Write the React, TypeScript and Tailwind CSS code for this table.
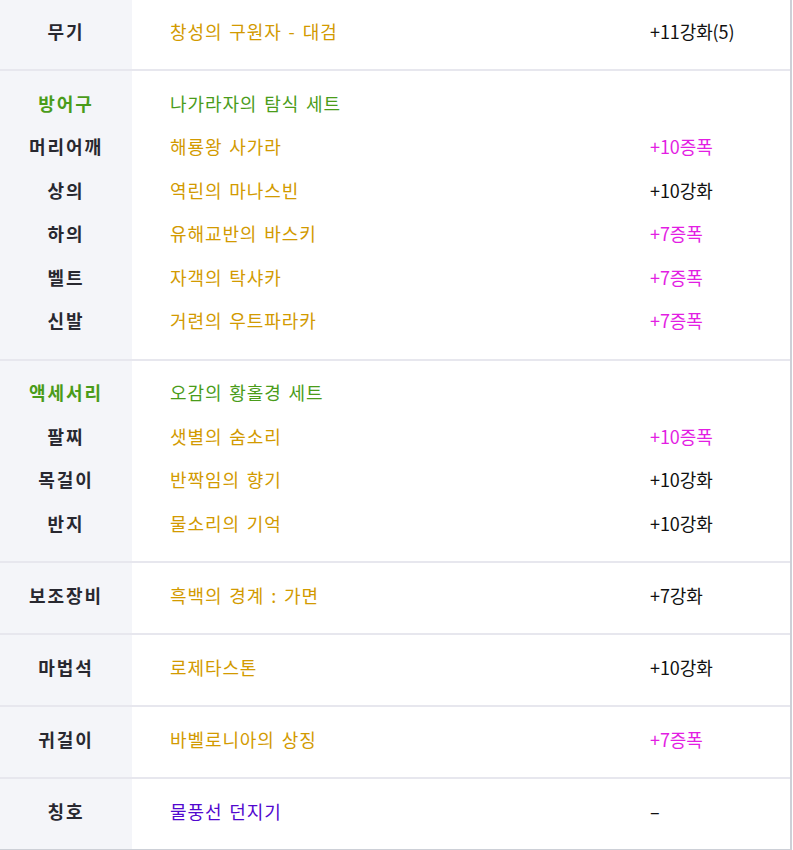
import React from "react";

type Row = { label: string; name: string; nameColor: string; val: string; valColor: string; labelColor?: string };

const GOLD = "text-[#d29a00]";
const GREEN = "text-[#4a9c1a]";
const MAG = "text-[#e31ee3]";
const BLK = "text-[#111111]";
const PUR = "text-[#5208cf]";

const sections: { rows: Row[]; first?: boolean }[] = [
  { first: true, rows: [{ label: "무기", name: "창성의 구원자 - 대검", nameColor: GOLD, val: "+11강화(5)", valColor: BLK }] },
  {
    rows: [
      { label: "방어구", labelColor: GREEN, name: "나가라자의 탐식 세트", nameColor: GREEN, val: "", valColor: BLK },
      { label: "머리어깨", name: "해룡왕 사가라", nameColor: GOLD, val: "+10증폭", valColor: MAG },
      { label: "상의", name: "역린의 마나스빈", nameColor: GOLD, val: "+10강화", valColor: BLK },
      { label: "하의", name: "유해교반의 바스키", nameColor: GOLD, val: "+7증폭", valColor: MAG },
      { label: "벨트", name: "자객의 탁샤카", nameColor: GOLD, val: "+7증폭", valColor: MAG },
      { label: "신발", name: "거련의 우트파라카", nameColor: GOLD, val: "+7증폭", valColor: MAG },
    ],
  },
  {
    rows: [
      { label: "액세서리", labelColor: GREEN, name: "오감의 황홀경 세트", nameColor: GREEN, val: "", valColor: BLK },
      { label: "팔찌", name: "샛별의 숨소리", nameColor: GOLD, val: "+10증폭", valColor: MAG },
      { label: "목걸이", name: "반짝임의 향기", nameColor: GOLD, val: "+10강화", valColor: BLK },
      { label: "반지", name: "물소리의 기억", nameColor: GOLD, val: "+10강화", valColor: BLK },
    ],
  },
  { rows: [{ label: "보조장비", name: "흑백의 경계 : 가면", nameColor: GOLD, val: "+7강화", valColor: BLK }] },
  { rows: [{ label: "마법석", name: "로제타스톤", nameColor: GOLD, val: "+10강화", valColor: BLK }] },
  { rows: [{ label: "귀걸이", name: "바벨로니아의 상징", nameColor: GOLD, val: "+7증폭", valColor: MAG }] },
  { rows: [{ label: "칭호", name: "물풍선 던지기", nameColor: PUR, val: "–", valColor: BLK }] },
];

export default function App() {
  return (
    <div
      className="w-[793px] h-[850px] overflow-hidden bg-white"
      style={{ fontFamily: '"Noto Sans CJK KR", "Noto Sans", sans-serif' }}
    >
      <div className="w-[792px] border-r-2 border-b-2 border-[#cdd0d7] flex flex-col">
        {sections.map((s, si) => (
          <div
            key={si}
            className={`flex ${si < sections.length - 1 ? "border-b-2 border-[#e7e7ee]" : ""}`}
          >
            <div className={`w-[132px] shrink-0 bg-[#f4f5f9] ${s.first ? "pt-[9.5px]" : "pt-[10.5px]"} pb-[16px]`}>
              {s.rows.map((r, i) => (
                <div
                  key={i}
                  className={`h-[43.5px] flex items-center justify-center text-[18px] font-semibold tracking-[2px] ${r.labelColor ?? "text-[#282830]"}`}
                >
                  {r.label}
                </div>
              ))}
            </div>
            <div className={`flex-1 ${s.first ? "pt-[9.5px]" : "pt-[10.5px]"} pb-[16px]`}>
              {s.rows.map((r, i) => (
                <div key={i} className="h-[43.5px] flex items-center text-[18px]">
                  <div className={`w-[518px] pl-[38px] shrink-0 tracking-[0.9px] [word-spacing:2px] ${r.nameColor}`}>{r.name}</div>
                  <div className={`${r.valColor} tracking-[-0.1px]`}>{r.val}</div>
                </div>
              ))}
            </div>
          </div>
        ))}
      </div>
    </div>
  );
}
